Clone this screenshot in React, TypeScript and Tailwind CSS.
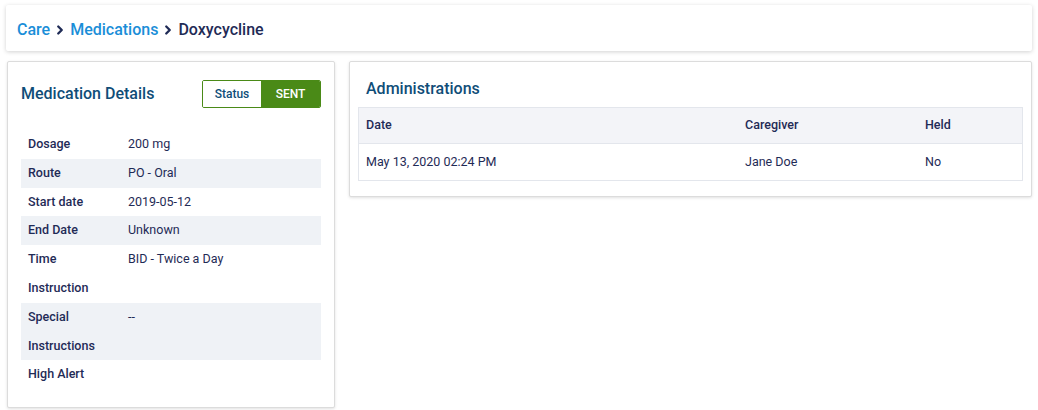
import { ChevronRight } from 'lucide-react';

const DETAILS: { label: string[]; value: string; shaded: boolean }[] = [
  { label: ['Dosage'], value: '200 mg', shaded: false },
  { label: ['Route'], value: 'PO - Oral', shaded: true },
  { label: ['Start date'], value: '2019-05-12', shaded: false },
  { label: ['End Date'], value: 'Unknown', shaded: true },
  { label: ['Time'], value: 'BID - Twice a Day', shaded: false },
  { label: ['Instruction'], value: '', shaded: false },
  { label: ['Special', 'Instructions'], value: '--', shaded: true },
  { label: ['High Alert'], value: '', shaded: false },
];

export default function App() {
  return (
    <div className="min-h-screen bg-white px-[6px] pt-[5px] text-[#1f2b56]" style={{ fontFamily: 'Roboto, "Liberation Sans", sans-serif' }}>
      <div className="flex h-[46px] items-center rounded-[2px] bg-white pl-[11px] pt-[4px] shadow-[0_1px_4px_rgba(0,0,0,0.18)]">
        <span className="text-[16px] font-medium text-[#1a8ed8]">Care</span>
        <ChevronRight className="mx-[3px] h-[14px] w-[14px] text-[#1f2b56]" strokeWidth={4} />
        <span className="text-[16px] font-medium text-[#1a8ed8]">Medications</span>
        <ChevronRight className="mx-[3px] h-[14px] w-[14px] text-[#1f2b56]" strokeWidth={4} />
        <span className="text-[16px] font-medium text-[#1f2b56]">Doxycycline</span>
      </div>

      <div className="mt-[10px] flex items-start gap-[14px] pl-[1px]">
        <div className="w-[328px] shrink-0 rounded-[2px] border border-[#dcdcdc] bg-white px-[13px] pb-[18px] pt-[18px] shadow-[0_1px_3px_rgba(0,0,0,0.12)]">
          <div className="flex items-center justify-between">
            <h2 className="text-[16px] font-medium text-[#0f4d78]">Medication Details</h2>
            <div className="flex h-[28px] overflow-hidden rounded-[2px] border border-[#4a8a17] text-[12px] font-medium">
              <span className="flex w-[58px] items-center justify-center bg-white text-[#0f4d78]">Status</span>
              <span className="flex w-[59px] items-center justify-center bg-[#4a8a17] text-white">SENT</span>
            </div>
          </div>
          <div className="mt-[22px]">
            {DETAILS.map((row, i) => (
              <div key={i} className={`flex ${row.shaded ? 'bg-[#eff2f6]' : ''}`}>
                <div className="w-[107px] pl-[7px] text-[12.5px] font-medium">
                  {row.label.map((l) => (
                    <div key={l} className="flex h-[28.8px] items-center">
                      {l}
                    </div>
                  ))}
                </div>
                <div className="flex h-[28.8px] items-center text-[12.5px]">{row.value}</div>
              </div>
            ))}
          </div>
        </div>

        <div className="flex-1 rounded-[2px] border border-[#dcdcdc] bg-white px-[8px] pb-[15px] pt-[15px] shadow-[0_1px_3px_rgba(0,0,0,0.12)]">
          <h2 className="pl-[8px] text-[16px] font-medium text-[#0f4d78]">Administrations</h2>
          <div className="mt-[6px] border border-[#e3e6ec] text-[12.5px]">
            <div className="flex h-[36px] items-center border-b border-[#e3e6ec] bg-[#f3f4f8] font-medium">
              <div className="w-[379px] pl-[7px]">Date</div>
              <div className="w-[180px] pl-[7px]">Caregiver</div>
              <div className="flex-1 pl-[7px]">Held</div>
            </div>
            <div className="flex h-[36px] items-center">
              <div className="w-[379px] pl-[7px]">May 13, 2020 02:24 PM</div>
              <div className="w-[180px] pl-[7px]">Jane Doe</div>
              <div className="flex-1 pl-[7px]">No</div>
            </div>
          </div>
        </div>
      </div>
    </div>
  );
}
